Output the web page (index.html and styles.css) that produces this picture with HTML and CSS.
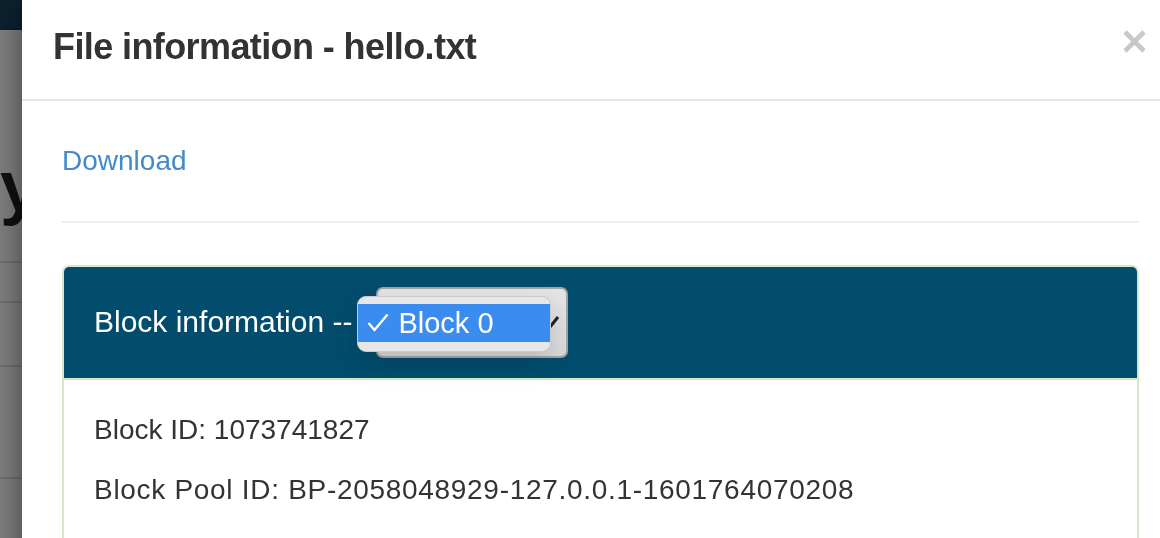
FILE: index.html
```html
<!DOCTYPE html>
<html lang="en">
<head>
<meta charset="utf-8">
<title>File information - hello.txt</title>
<link rel="stylesheet" href="styles.css">
</head>
<body>
  <div class="page">
    <div class="navbar"></div>
    <div class="page-header">
      <h1 class="page-title">Browse Directory</h1>
    </div>
    <div class="table">
      <div class="row row-a"></div>
      <div class="row row-b"></div>
      <div class="row row-c"></div>
      <div class="row row-d"></div>
    </div>
  </div>
  <div class="backdrop"></div>
  <div class="modal">
    <div class="modal-dialog">
      <div class="modal-header">
        <h4 class="modal-title">File information - hello.txt</h4>
        <button class="close" type="button" aria-label="Close">
          <svg width="23" height="23" viewBox="0 0 23 23"><path d="M2 2 L21 21 M21 2 L2 21" stroke="#c8c8c8" stroke-width="4.6" stroke-linecap="butt" fill="none"/></svg>
        </button>
      </div>
      <div class="modal-body">
        <div class="download-row"><a class="download" href="#">Download</a></div>
        <hr class="divider">
        <div class="panel">
          <div class="panel-heading">
            <span class="heading-text">Block information --</span>
            <div class="select">
              <svg class="chevron" width="12" height="14" viewBox="0 0 12 14"><path d="M2 12 L10 2" stroke="#222" stroke-width="3" fill="none"/></svg>
              <div class="menu">
                <div class="menu-item">
                  <svg class="check" width="22" height="19" viewBox="0 0 22 19"><path d="M1.5 10 L7.5 17 L20.5 1.5" stroke="#fff" stroke-width="2.4" fill="none" stroke-linejoin="miter"/></svg>
                  <span>Block 0</span>
                </div>
              </div>
            </div>
          </div>
          <div class="panel-body">
            <p>Block ID: 1073741827</p>
            <p class="pool">Block Pool ID: BP-2058048929-127.0.0.1-1601764070208</p>
          </div>
        </div>
      </div>
    </div>
  </div>
</body>
</html>
```
FILE: styles.css
```css
html, body {
  margin: 0;
  padding: 0;
  height: 100%;
  overflow: hidden;
  background: #fff;
  font-family: "Liberation Sans", Arial, Helvetica, sans-serif;
  color: #333;
}

/* page behind the modal */
.page {
  width: 40px;
}
.navbar {
  height: 30px;
  background: #17405e;
}
.page-header {
  display: flex;
  justify-content: flex-end;
  margin-top: 117px;
  width: 40px;
}
.page-title {
  margin: 0;
  font-size: 72px;
  line-height: 1.1;
  font-weight: bold;
  color: #222;
  white-space: nowrap;
}
.table {
  margin-top: 35px;
}
.row {
  border-top: 2px solid #dcdcdc;
}
.row-a { height: 38px; }
.row-b { height: 62px; }
.row-c { height: 110px; }
.row-d { height: 60px; }

.backdrop {
  position: fixed;
  inset: 0;
  background: rgba(0, 0, 0, 0.5);
}

/* modal */
.modal {
  position: fixed;
  inset: 0;
}
.modal-dialog {
  margin-left: 22px;
  width: 1158px;
  height: 700px;
  background: #fff;
  border-right: 1px solid rgba(0, 0, 0, 0.2);
  box-shadow: 0 10px 30px rgba(0, 0, 0, 0.5);
  box-sizing: border-box;
}
.modal-header {
  display: flex;
  justify-content: space-between;
  align-items: flex-start;
  padding: 27px 33px 32px 31px;
  border-bottom: 2px solid #e5e5e5;
}
.modal-title {
  margin: 0;
  font-size: 36px;
  line-height: 1.1;
  font-weight: bold;
  letter-spacing: -0.6px;
  color: #333;
}
.close {
  margin: 3px 0 0 0;
  padding: 0;
  border: 0;
  background: transparent;
  line-height: 0;
  cursor: pointer;
}

.modal-body {
  padding: 40px;
}
.download-row {
  font-size: 28px;
  line-height: 40px;
}
.download {
  color: #428bca;
  text-decoration: none;
}
.divider {
  margin: 40px 0 42px 0;
  border: 0;
  border-top: 2px solid #eee;
  height: 0;
}

.panel {
  border: 2px solid #d6e9c6;
  border-radius: 7px;
}
.panel-heading {
  display: flex;
  align-items: center;
  padding: 20px 30px;
  background: #024d6e;
  color: #fff;
  border-bottom: 2px solid #d6e9c6;
  border-radius: 5px 5px 0 0;
  font-size: 30px;
  line-height: 40px;
}
.heading-text {
  white-space: nowrap;
}

.select {
  position: relative;
  margin-left: 24px;
  width: 192px;
  height: 71px;
  box-sizing: border-box;
  border: 2px solid #a3a3a3;
  border-radius: 7px;
  background: linear-gradient(#e4e4e4, #d9d9d9);
  display: flex;
  justify-content: flex-end;
  align-items: center;
  padding-right: 6px;
}
.chevron {
  display: block;
}
.menu {
  position: absolute;
  left: -21px;
  top: 7px;
  width: 194px;
  height: 56px;
  box-sizing: border-box;
  padding-top: 7px;
  background: #e7e7e7;
  border: 1px solid #c9c9c9;
  border-radius: 9px;
  box-shadow: 0 12px 26px rgba(0, 0, 0, 0.14);
}
.menu-item {
  display: flex;
  align-items: center;
  gap: 9px;
  height: 38px;
  padding-left: 9px;
  background: #3b8cf0;
  color: #fff;
  font-size: 29px;
}
.check {
  display: block;
}

.panel-body {
  padding: 30px 30px 200px 30px;
  font-size: 28px;
  line-height: 40px;
}
.panel-body p {
  margin: 0 0 20px 0;
}
.panel-body .pool {
  letter-spacing: 0.7px;
}
```
